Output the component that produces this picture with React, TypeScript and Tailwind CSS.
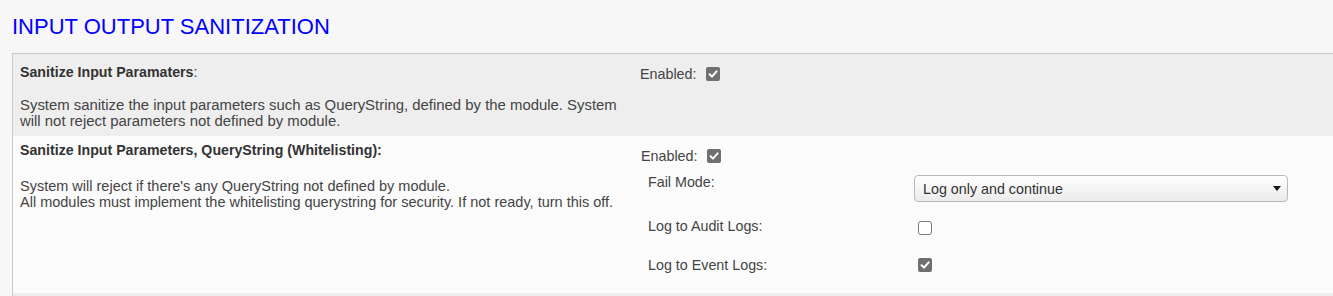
const Checkbox = ({ checked, className = "" }: { checked: boolean; className?: string }) => {
  if (!checked) {
    return (
      <span
        className={`inline-block w-[14px] h-[14px] rounded-[3px] border border-[#7a7a7a] bg-white ${className}`}
      />
    );
  }
  return (
    <span
      className={`inline-flex items-center justify-center w-[14px] h-[14px] rounded-[2px] bg-[#707070] ${className}`}
    >
      <svg width="10" height="10" viewBox="0 0 10 10">
        <path d="M1.6 5.2 L4 7.6 L8.6 2.4" stroke="white" strokeWidth="2" fill="none" strokeLinecap="round" strokeLinejoin="round" />
      </svg>
    </span>
  );
};

const Enabled = ({ className = "" }: { className?: string }) => (
  <div className={`flex items-center h-[16px] ${className}`}>
    <span>Enabled:</span>
    <Checkbox checked className="ml-[10px]" />
  </div>
);

export default function App() {
  return (
    <div className="min-h-[296px] bg-[#f7f7f7] font-['Liberation_Sans',Arial,sans-serif] text-[14.3px] leading-[16px] text-[#444] overflow-hidden">
      <h1 className="pl-[12px] pt-[16px] text-[22px] leading-[22px] text-[#0000ff]">
        INPUT OUTPUT SANITIZATION
      </h1>

      <div className="mt-[15px] ml-[12px] border-l border-t border-[#c9c9c9]">
        {/* row 1 */}
        <div className="flex bg-[#eeeeee] h-[82px]">
          <div className="w-[623px] pl-[7px] pt-[10px]">
            <div className="text-[#333] text-[14.2px]">
              <span className="font-bold">Sanitize Input Paramaters</span>:
            </div>
            <p className="mt-[17px] text-[14.9px] whitespace-nowrap">
              System sanitize the input parameters such as QueryString, defined by the module. System
              <br />
              will not reject parameters not defined by module.
            </p>
          </div>
          <div className="pl-[4px] pt-[12px]">
            <Enabled />
          </div>
        </div>

        {/* row 2 */}
        <div className="flex bg-[#fbfbfb] h-[157px]">
          <div className="w-[623px] pl-[7px] pt-[6px]">
            <div className="font-bold text-[#333] text-[14.2px]">
              Sanitize Input Parameters, QueryString (Whitelisting):
            </div>
            <p className="mt-[20px] text-[14.5px] whitespace-nowrap">
              System will reject if there's any QueryString not defined by module.
              <br />
              All modules must implement the whitelisting querystring for security. If not ready, turn this off.
            </p>
          </div>
          <div className="pl-[4px] pt-[12px]">
            <Enabled className="ml-[1px]" />
            <div className="pl-[8px] mt-[10px]">
              <div className="flex items-start">
                <div className="w-[266px]">Fail Mode:</div>
                <div className="mt-[1px] w-[374px] h-[27px] rounded-[4px] border border-[#b9b9b9] bg-gradient-to-b from-white to-[#ebebeb] flex items-center justify-between pl-[8px] pr-[6px] text-[#333]">
                  <span>Log only and continue</span>
                  <svg width="8" height="5" viewBox="0 0 8 5">
                    <path d="M0 0 H8 L4 5 Z" fill="#111" />
                  </svg>
                </div>
              </div>
              <div className="flex items-start mt-[16px]">
                <div className="w-[266px]">Log to Audit Logs:</div>
                <Checkbox checked={false} className="ml-[4px] mt-[3px]" />
              </div>
              <div className="flex items-start mt-[22px]">
                <div className="w-[266px]">Log to Event Logs:</div>
                <Checkbox checked className="ml-[4px] mt-[1px]" />
              </div>
            </div>
          </div>
        </div>

        <div className="bg-[#eeeeee] h-[10px]" />
      </div>
    </div>
  );
}
